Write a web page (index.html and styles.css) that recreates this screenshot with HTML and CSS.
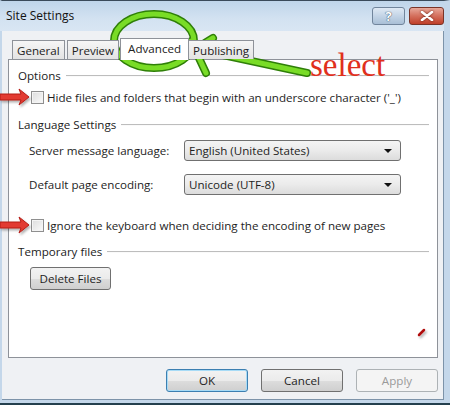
FILE: index.html
```html
<!DOCTYPE html>
<html lang="en">
<head>
    <meta charset="UTF-8">
    <meta name="viewport" content="width=device-width, initial-scale=1.0">
    <title>Site Settings</title>
    <link rel="stylesheet" href="styles.css">
</head>
<body>
    <div class="window">
        <div class="titlebar">
            <span class="title">Site Settings</span>
            <div class="caption-btns">
                <div class="cap help">?</div>
                <div class="cap close">
                    <svg width="14" height="10" viewBox="0 0 14 10">
                        <path d="M2 1 L12 9 M12 1 L2 9" stroke="#fff" stroke-width="2.6" stroke-linecap="round"/>
                    </svg>
                </div>
            </div>
        </div>
        <div class="client">
            <div class="tabs">
                <div class="tab">General</div>
                <div class="tab">Preview</div>
                <div class="tab selected">Advanced</div>
                <div class="tab">Publishing</div>
            </div>
            <div class="panel">
                <div class="group first"><span>Options</span><i></i></div>
                <label class="check-row">
                    <span class="checkbox"></span>
                    Hide files and folders that begin with an underscore character ('_')
                </label>

                <div class="group lang"><span>Language Settings</span><i></i></div>
                <div class="field-row first-field">
                    <span class="field-label">Server message language:</span>
                    <div class="select">English (United States)<b class="arrow"></b></div>
                </div>
                <div class="field-row">
                    <span class="field-label">Default page encoding:</span>
                    <div class="select">Unicode (UTF-8)<b class="arrow"></b></div>
                </div>
                <label class="check-row second">
                    <span class="checkbox"></span>
                    Ignore the keyboard when deciding the encoding of new pages
                </label>

                <div class="group temp"><span>Temporary files</span><i></i></div>
                <div class="btn delete">Delete Files</div>
            </div>
            <div class="footer">
                <div class="btn default">OK</div>
                <div class="btn">Cancel</div>
                <div class="btn disabled">Apply</div>
            </div>
        </div>
    </div>

    <!-- hand drawn marks on top of the dialog -->
    <svg class="marks" width="450" height="405" viewBox="0 0 450 405">
        <defs>
            <filter id="shade" x="-20%" y="-20%" width="140%" height="140%">
                <feDropShadow dx="1.5" dy="2" stdDeviation="1.2" flood-color="#000" flood-opacity="0.3"/>
            </filter>
        </defs>
        <g class="loop-edge">
            <ellipse cx="154" cy="41" rx="40" ry="27"/>
            <path d="M195 49 L307 73"/>
            <path d="M192 51 L213 38"/>
            <path d="M191 41 L206 73"/>
        </g>
        <g class="loop-fill">
            <ellipse cx="154" cy="41" rx="40" ry="27"/>
            <path d="M195 49 L307 73"/>
            <path d="M192 51 L213 38"/>
            <path d="M191 41 L206 73"/>
        </g>
        <g filter="url(#shade)">
            <path d="M0 94 L21 94 L19 89 L29 97 L19 105 L21 100 L0 100 Z" fill="#e23b30" stroke="#b51e18" stroke-width="1"/>
            <path d="M0 222 L21 222 L19 217 L29 225 L19 233 L21 228 L0 228 Z" fill="#e23b30" stroke="#b51e18" stroke-width="1"/>
            <path d="M419 335 L424 330" stroke="#b01010" stroke-width="2.5" stroke-linecap="round"/>
        </g>
        <text x="310" y="76" class="select-note">select</text>
    </svg>
</body>
</html>
```
FILE: styles.css
```css
*{
    margin: 0;
    padding: 0;
    box-sizing: border-box;
}
body{
    width: 450px;
    height: 405px;
    overflow: hidden;
    font-family: "Open Sans", "Noto Sans", sans-serif;
    font-size: 11.6px;
    color: #1e1e1e;
    background: #fff;
    position: relative;
}
.window{
    width: 450px;
    height: 405px;
    border-top: 1px solid #3a4a5a;
    border-left: 2px solid #c4d7ea;
    border-right: 6px solid #c4d7ea;
    border-bottom: 5px solid #c4d7ea;
    box-shadow: inset -1px -1px 0 #7d93a9;
    background: #eff1f4;
    display: flex;
    flex-direction: column;
    position: relative;
}
.window::after{
    content: "";
    position: absolute;
    left: -2px;
    right: -6px;
    bottom: -5px;
    height: 2px;
    background: #24404e;
}
.titlebar{
    height: 30px;
    display: flex;
    align-items: center;
    justify-content: space-between;
    padding-left: 4px;
    margin-left: -2px;
    background: linear-gradient(#bfd5ea, #d3e2f1 60%, #d9e6f3);
}
.title{
    font-size: 12px;
    color: #111;
    margin-top: -1px;
    margin-left: 2px;
}
.caption-btns{
    display: flex;
    gap: 4px;
    margin-top: -1px;
}
.cap{
    height: 18px;
    border-radius: 3px;
    display: flex;
    align-items: center;
    justify-content: center;
}
.help{
    width: 33px;
    border: 1px solid #71859c;
    background: linear-gradient(#dfe9f4, #c3d4e6 50%, #a9bfd6);
    color: #fff;
    font-weight: bold;
    font-size: 13px;
    text-shadow: 0 0 1px #33495f, 0 0 1px #33495f;
}
.close{
    width: 35px;
    border: 1px solid #7a3428;
    background: linear-gradient(#e8a89a, #d46f5c 50%, #c0402a);
}
.close svg{
    filter: drop-shadow(0 0 1px #6b1d10);
}
.client{
    flex: 1;
    padding: 6px 6px 0 6px;
    display: flex;
    flex-direction: column;
}
.tabs{
    height: 22px;
    display: flex;
    align-items: flex-end;
    padding-left: 4px;
    position: relative;
    z-index: 1;
}
.tab{
    height: 19px;
    padding: 0 4px;
    border: 1px solid #8e9299;
    border-bottom: none;
    margin-right: 2px;
    background: linear-gradient(#f6f6f6, #e3e3e3);
    display: flex;
    align-items: center;
    color: #222;
}
.tab.selected{
    height: 22px;
    background: #fff;
    margin: 0 -1px -1px -1px;
    padding: 0 7px 2px;
    position: relative;
}
.panel{
    height: 299px;
    width: 430px;
    background: #fff;
    border: 1px solid #8e9299;
    padding: 0 8px 0 9px;
    display: flex;
    flex-direction: column;
}
.group{
    height: 16px;
    display: flex;
    align-items: center;
    gap: 5px;
    color: #222;
}
.group i{
    flex: 1;
    height: 1px;
    background: #bdbdbd;
    box-shadow: 0 1px 0 #fafafa;
    margin-top: 1px;
}
.group.first{ margin-top: 7px; }
.group.lang{ margin-top: 11px; }
.group.temp{ margin-top: 10px; }
.check-row{
    height: 16px;
    margin-top: 6px;
    padding-left: 13px;
    display: flex;
    align-items: center;
    gap: 3px;
}
.check-row.second{ margin-top: 22px; }
.checkbox{
    width: 13px;
    height: 13px;
    border: 1px solid #8f8f8f;
    background: linear-gradient(135deg, #dcdcdc, #fbfbfb);
    box-shadow: inset 0 0 0 1px #f4f4f4;
}
.field-row{
    height: 21px;
    display: flex;
    align-items: center;
    padding-left: 11px;
    margin-top: 13px;
}
.field-row.first-field{ margin-top: 8px; }
.field-label{
    width: 155px;
}
.select{
    width: 217px;
    height: 21px;
    border: 1px solid #707070;
    border-radius: 3px;
    background: linear-gradient(#f4f4f4, #ebebeb 50%, #dcdcdc);
    display: flex;
    align-items: center;
    padding-left: 4px;
    position: relative;
}
.arrow{
    position: absolute;
    right: 8px;
    top: 8px;
    border-left: 4px solid transparent;
    border-right: 4px solid transparent;
    border-top: 4px solid #111;
}
.btn{
    width: 82px;
    height: 23px;
    border: 1px solid #707070;
    border-radius: 3px;
    background: linear-gradient(#f2f2f2, #ebebeb 50%, #dddddd 51%, #cfcfcf);
    display: flex;
    align-items: center;
    justify-content: center;
    color: #1e1e1e;
}
.btn.delete{
    margin-top: 8px;
    margin-left: 12px;
    width: 81px;
}
.footer{
    display: flex;
    justify-content: flex-end;
    gap: 13px;
    padding-top: 11px;
}
.btn.default{
    border-color: #3c7fb1;
    box-shadow: inset 0 0 0 1px #a7dbf6;
}
.btn.disabled{
    border-color: #adb2b5;
    background: #f4f4f4;
    color: #9a9a9a;
}
.marks{
    position: absolute;
    top: 0;
    left: 0;
    pointer-events: none;
}
/* green pen loop: dark rim under a bright core */
.loop-edge{
    fill: none;
    stroke: #2f7f08;
    stroke-width: 8px;
    stroke-linecap: round;
}
.loop-fill{
    fill: none;
    stroke: #79dc26;
    stroke-width: 5px;
    stroke-linecap: round;
}
.select-note{
    font-family: "Liberation Serif", serif;
    font-size: 33px;
    fill: #e0301c;
}
```
